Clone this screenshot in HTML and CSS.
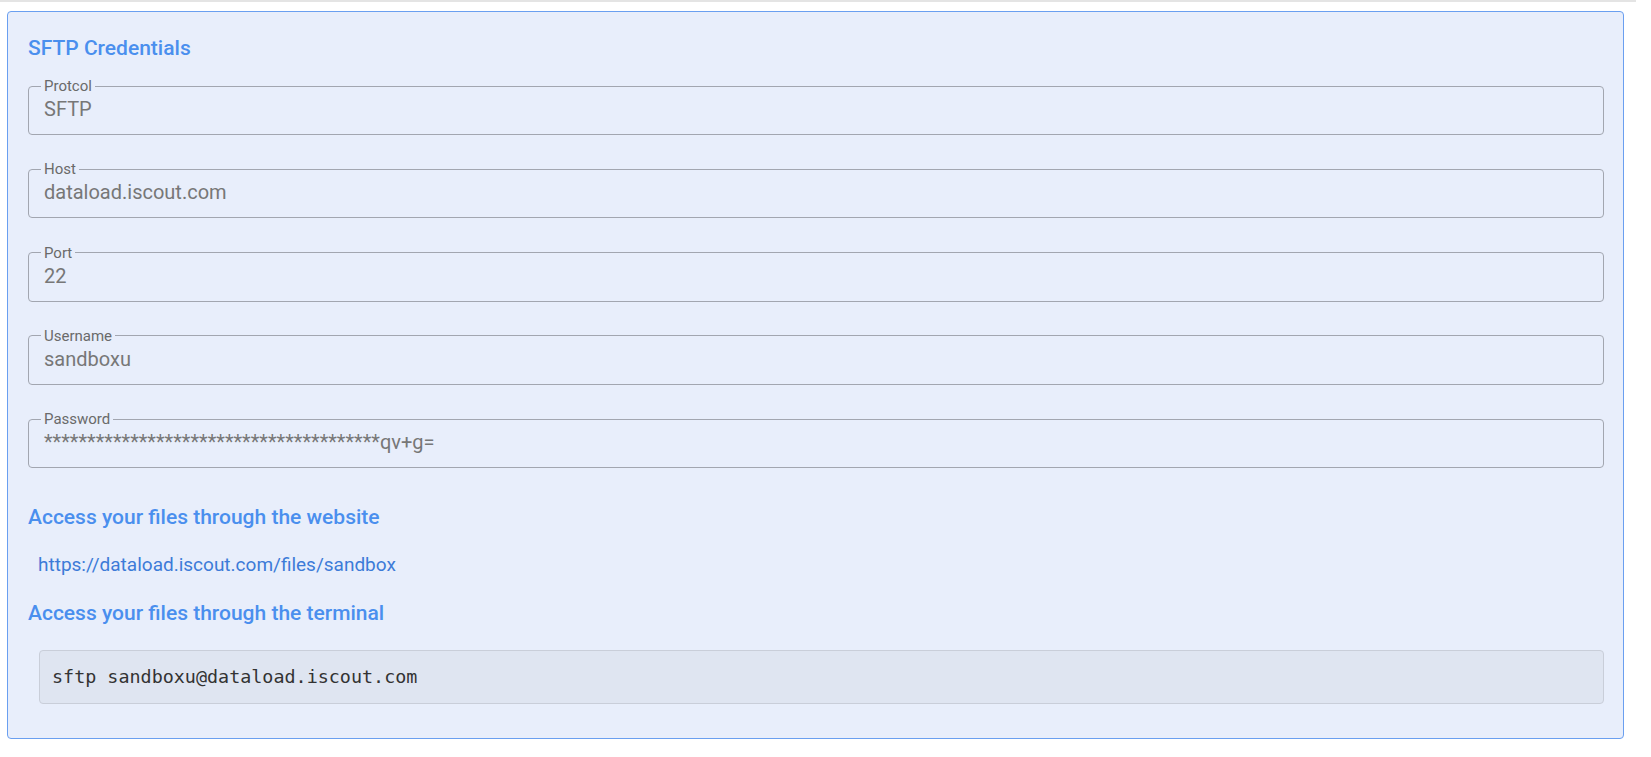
FILE: index.html
```html
<!DOCTYPE html>
<html>
<head>
    <title>SFTP Credentials</title>
    <link rel="stylesheet" href="styles.css">
</head>
<body>
    <div class="page">
        <div class="panel">
            <h3 class="section-title">SFTP Credentials</h3>

            <div class="fields">
                <fieldset class="field">
                    <legend>Protcol</legend>
                    <div class="value">SFTP</div>
                </fieldset>
                <fieldset class="field">
                    <legend>Host</legend>
                    <div class="value">dataload.iscout.com</div>
                </fieldset>
                <fieldset class="field">
                    <legend>Port</legend>
                    <div class="value">22</div>
                </fieldset>
                <fieldset class="field">
                    <legend>Username</legend>
                    <div class="value">sandboxu</div>
                </fieldset>
                <fieldset class="field">
                    <legend>Password</legend>
                    <div class="value">***************************************qv+g=</div>
                </fieldset>
            </div>

            <h3 class="section-title">Access your files through the website</h3>
            <a class="files-link" href="#">https://dataload.iscout.com/files/sandbox</a>

            <h3 class="section-title">Access your files through the terminal</h3>
            <pre class="terminal">sftp sandboxu@dataload.iscout.com</pre>
        </div>
    </div>
</body>
</html>
```

FILE: styles.css
```css
body { margin: 0; font-family: Roboto, "Liberation Sans", sans-serif; background: #fff; }
.page { width: 1636px; border-top: 2px solid #e4e4e4; padding-top: 9px; }
.panel { box-sizing: border-box; margin-left: 7px; width: 1617px; height: 728px; padding: 22px 19px 0 20px; background: #e8eefb; border: 1px solid #6a9ff0; border-radius: 4px; }
.section-title { margin: 0; font-size: 21px; font-weight: 500; line-height: 28px; color: #4a8fee; }
.fields { display: flex; flex-direction: column; gap: 26.25px; margin-top: 16px; margin-bottom: 35px; }
.field { box-sizing: border-box; margin: 0; padding: 0 12px; border: 1px solid #a2a6b0; border-radius: 4px; height: 57px; }
.field legend { padding: 0 3px; font-size: 15px; line-height: 16px; color: #6a6a6a; }
.value { padding-left: 3px; margin-top: 3px; font-size: 20px; line-height: 24px; color: #777; }
.files-link { display: block; margin: 22px 0 22px 10px; font-size: 19px; line-height: 24px; color: #3c7bd8; text-decoration: none; }
.terminal { box-sizing: border-box; margin: 23px 0 0 11px; padding: 0 12px; height: 54px; line-height: 52px; background: #dfe5f1; border: 1px solid #c9ced9; border-radius: 4px; font-family: "DejaVu Sans Mono", monospace; font-size: 18.4px; color: #333; }
```
